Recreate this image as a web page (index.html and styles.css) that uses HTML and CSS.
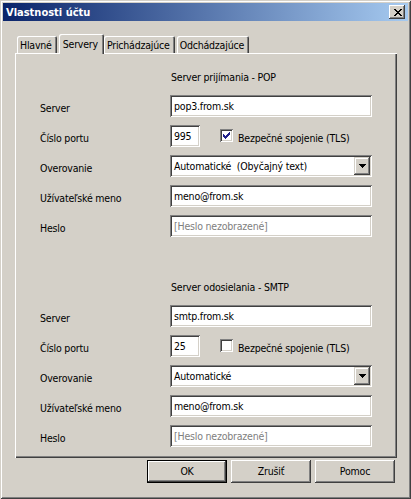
FILE: index.html
```html
<!DOCTYPE html>
<html lang="sk">
<head>
<meta charset="utf-8">
<title>Vlastnosti účtu</title>
<link rel="stylesheet" href="styles.css">
</head>
<body>
<div class="window">
  <div class="titlebar">
    <span class="title">Vlastnosti účtu</span>
    <div class="close">
      <svg width="8" height="7" viewBox="0 0 8 7" shape-rendering="crispEdges"><path d="M0 0h2v1h-2zM6 0h2v1h-2zM1 1h2v1h-2zM5 1h2v1h-2zM2 2h4v1h-4zM3 3h2v1h-2zM2 4h4v1h-4zM1 5h2v1h-2zM5 5h2v1h-2zM0 6h2v1h-2zM6 6h2v1h-2z" fill="#000"/></svg>
    </div>
  </div>
  <div class="client">
    <div class="tabs">
      <div class="tab">Hlavné</div>
      <div class="tab active">Servery</div>
      <div class="tab">Prichádzajúce</div>
      <div class="tab">Odchádzajúce</div>
    </div>
    <div class="panel">
      <div class="group">
        <div class="heading">Server prijímania - POP</div>
        <div class="form">
          <span class="label">Server</span>
          <div class="edit">pop3.from.sk</div>
          <span class="label">Číslo portu</span>
          <div class="port-row">
            <div class="edit port">995</div>
            <span class="check">
              <svg width="13" height="13" viewBox="0 0 13 13" shape-rendering="crispEdges"><path d="M9 3h1v1h-1zM8 4h2v1h-2zM3 5h1v1h-1zM7 5h3v1h-3zM3 6h2v1h-2zM6 6h3v1h-3zM3 7h5v1h-5zM4 8h3v1h-3zM5 9h1v1h-1z" fill="#21218c"/></svg>
            </span>
            <span class="check-label">Bezpečné spojenie (TLS)</span>
          </div>
          <span class="label">Overovanie</span>
          <div class="combo">
            <span class="combo-text">Automatické  (Obyčajný text)</span>
            <span class="drop">
              <svg width="7" height="4" viewBox="0 0 7 4" shape-rendering="crispEdges"><path d="M0 0h7v1h-7zM1 1h5v1h-5zM2 2h3v1h-3zM3 3h1v1h-1z" fill="#000"/></svg>
            </span>
          </div>
          <span class="label">Užívateľské meno</span>
          <div class="edit">meno@from.sk</div>
          <span class="label">Heslo</span>
          <div class="edit disabled">[Heslo nezobrazené]</div>
        </div>
      </div>
      <div class="group second">
        <div class="heading">Server odosielania - SMTP</div>
        <div class="form">
          <span class="label">Server</span>
          <div class="edit">smtp.from.sk</div>
          <span class="label">Číslo portu</span>
          <div class="port-row">
            <div class="edit port">25</div>
            <span class="check"></span>
            <span class="check-label">Bezpečné spojenie (TLS)</span>
          </div>
          <span class="label">Overovanie</span>
          <div class="combo">
            <span class="combo-text">Automatické</span>
            <span class="drop">
              <svg width="7" height="4" viewBox="0 0 7 4" shape-rendering="crispEdges"><path d="M0 0h7v1h-7zM1 1h5v1h-5zM2 2h3v1h-3zM3 3h1v1h-1z" fill="#000"/></svg>
            </span>
          </div>
          <span class="label">Užívateľské meno</span>
          <div class="edit">meno@from.sk</div>
          <span class="label">Heslo</span>
          <div class="edit disabled">[Heslo nezobrazené]</div>
        </div>
      </div>
    </div>
    <div class="buttons">
      <div class="btn default">OK</div>
      <div class="btn">Zrušiť</div>
      <div class="btn">Pomoc</div>
    </div>
  </div>
</div>
</body>
</html>
```

FILE: styles.css
```css
* { box-sizing: border-box; }

html, body {
  margin: 0;
  padding: 0;
}

body {
  background: #d4d0c8;
  color: #000;
  font-family: "DejaVu Sans Condensed", "DejaVu Sans", sans-serif;
  font-size: 10.5px;
  letter-spacing: -0.2px;
  line-height: 13px;
}

.window {
  width: 411px;
  height: 499px;
  padding: 3px;
  background: #d4d0c8;
  box-shadow: inset 1px 1px #d4d0c8, inset -1px -1px #404040, inset 2px 2px #fff, inset -2px -2px #808080;
  display: flex;
  flex-direction: column;
}

.titlebar {
  height: 18px;
  flex: none;
  background: linear-gradient(to right, #0a246a, #a6caf0);
  display: flex;
  align-items: center;
  justify-content: space-between;
  padding: 0 3px 0 3px;
}

.title {
  color: #fff;
  font-weight: bold;
  font-size: 11px;
  letter-spacing: 0;
}

.close {
  width: 16px;
  height: 14px;
  background: #d4d0c8;
  box-shadow: inset -1px -1px #404040, inset 1px 1px #fff, inset -2px -2px #808080;
  display: flex;
  align-items: center;
  justify-content: center;
  padding-left: 1px;
}

.close svg { display: block; }

.client {
  flex: 1;
  display: flex;
  flex-direction: column;
  padding: 13px 11px 13px 12px;
}

.tabs {
  height: 19px;
  flex: none;
  display: flex;
  align-items: flex-end;
  padding-left: 2px;
  position: relative;
  z-index: 1;
}

.tab {
  height: 17px;
  padding: 3px 5px 0 3px;
  margin-right: 2px;
  background: #d4d0c8;
  border-radius: 2px 2px 0 0;
  box-shadow: inset 1px 1px #fff, inset -1px 0 #404040, inset -2px 0 #808080;
  white-space: nowrap;
}

.tab.active {
  height: 20px;
  margin-bottom: -1px;
  margin-right: 0;
  padding-top: 4px;
  padding-right: 6px;
  padding-left: 4px;
}

.panel {
  flex: 1;
  background: #d4d0c8;
  box-shadow: inset 1px 1px #fff, inset -1px -1px #404040, inset -2px -2px #808080;
  padding: 18px 0 0 25px;
}

.heading {
  padding-left: 131px;
  margin-bottom: 11px;
  white-space: nowrap;
}

.group.second {
  margin-top: 44px;
}

.form {
  display: grid;
  grid-template-columns: 130px 202px;
  grid-auto-rows: 22px;
  row-gap: 8px;
}

.label {
  padding-top: 7px;
  white-space: nowrap;
}

.edit {
  height: 22px;
  background: #fff;
  box-shadow: inset 1px 1px #808080, inset -1px -1px #fff, inset 2px 2px #404040, inset -2px -2px #d4d0c8;
  padding: 5px 0 0 4px;
  white-space: nowrap;
  overflow: hidden;
}

.edit.disabled {
  color: #808080;
}

.port-row {
  display: flex;
  align-items: flex-start;
}

.edit.port {
  width: 30px;
  flex: none;
}

.check {
  width: 13px;
  height: 13px;
  margin: 4px 5px 0 20px;
  background: #fff;
  box-shadow: inset 1px 1px #808080, inset -1px -1px #fff, inset 2px 2px #404040, inset -2px -2px #d4d0c8;
}

.check svg { display: block; }

.check-label {
  padding-top: 7px;
  white-space: nowrap;
}

.combo {
  height: 22px;
  background: #fff;
  box-shadow: inset 1px 1px #808080, inset -1px -1px #fff, inset 2px 2px #404040, inset -2px -2px #d4d0c8;
  padding: 2px 2px 2px 4px;
  display: flex;
  justify-content: space-between;
}

.combo-text {
  padding-top: 3px;
  white-space: pre;
}

.drop {
  width: 16px;
  height: 18px;
  background: #d4d0c8;
  box-shadow: inset -1px -1px #404040, inset 1px 1px #d4d0c8, inset -2px -2px #808080, inset 2px 2px #fff;
  display: flex;
  align-items: center;
  justify-content: center;
}

.drop svg { display: block; }

.buttons {
  flex: none;
  display: flex;
  justify-content: flex-end;
  gap: 4px;
  margin-top: 2px;
  padding-right: 2px;
}

.btn {
  width: 80px;
  height: 23px;
  display: flex;
  align-items: center;
  justify-content: center;
  background: #d4d0c8;
  box-shadow: inset -1px -1px #404040, inset 1px 1px #fff, inset -2px -2px #808080, inset 2px 2px #d4d0c8;
}

.btn.default {
  box-shadow: inset 0 0 0 1px #000, inset -2px -2px #404040, inset 2px 2px #fff, inset -3px -3px #808080;
}
```
